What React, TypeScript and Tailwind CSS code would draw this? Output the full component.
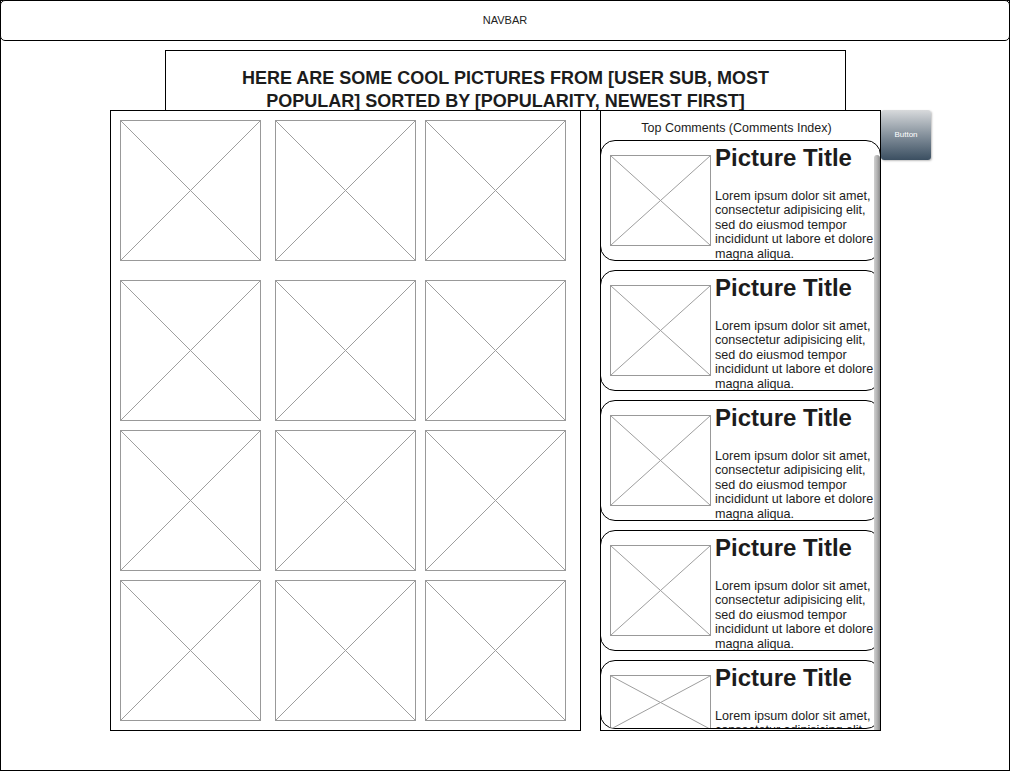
import React from 'react'

const font = { fontFamily: '"Liberation Sans", Arial, sans-serif' }

const lorem =
  'Lorem ipsum dolor sit amet, consectetur adipisicing elit, sed do eiusmod tempor incididunt ut labore et dolore magna aliqua.'

function Placeholder({ className }: { className: string }) {
  return (
    <div className={`relative border border-[#999] bg-white ${className}`}>
      <svg className="absolute inset-0 w-full h-full" preserveAspectRatio="none" viewBox="0 0 100 100">
        <line x1="0" y1="0" x2="100" y2="100" stroke="#9e9e9e" strokeWidth="1" vectorEffect="non-scaling-stroke" />
        <line x1="100" y1="0" x2="0" y2="100" stroke="#9e9e9e" strokeWidth="1" vectorEffect="non-scaling-stroke" />
      </svg>
    </div>
  )
}

function CommentCard({ short }: { short?: boolean }) {
  return (
    <div
      className={`-ml-px w-[281px] shrink-0 flex overflow-hidden rounded-[15px] border border-black bg-white ${
        short ? 'h-[69px]' : 'h-[121px] mb-[9px]'
      }`}
    >
      <Placeholder className={`ml-[9px] mt-[14px] w-[101px] shrink-0 ${short ? 'h-[55px]' : 'h-[91px]'}`} />
      <div className="ml-[4px] pt-[3px] w-[160px] text-[#1c1c1c]">
        <p className="text-[24px] font-bold leading-[28px] whitespace-nowrap">Picture Title</p>
        <p className="mt-[17px] text-[12.6px] leading-[14.4px]">{lorem}</p>
      </div>
    </div>
  )
}

export default function App() {
  const rows = [0, 1, 2, 3]
  const cols = [0, 1, 2]
  return (
    <div style={font} className="w-[1010px] h-[771px] border border-black bg-white text-black">
      <div className="-mt-px -mx-px w-[1010px] h-[41px] rounded-[5px] border border-black bg-white flex items-center justify-center">
        <span className="text-[11px] text-[#222]">NAVBAR</span>
      </div>

      <div className="mt-[9px] ml-[164px] w-[681px] h-[61px] border border-black pt-[16px] text-center text-[18px] font-bold leading-[23px] text-[#1c1c1c]">
        HERE ARE SOME COOL PICTURES FROM [USER SUB, MOST
        <br />
        POPULAR] SORTED BY [POPULARITY, NEWEST FIRST]
      </div>

      <div className="-mt-px flex items-start">
        <div className="ml-[109px] w-[471px] h-[621px] border border-black bg-white p-[9px]">
          <div className="grid grid-cols-[141px_146px_141px] grid-rows-[151px_141px_141px_141px] gap-[9px]">
            {rows.map((r) =>
              cols.map((c) => (
                <Placeholder
                  key={`${r}-${c}`}
                  className={`w-[141px] h-[141px] self-start ${c === 1 ? 'justify-self-end' : ''}`}
                />
              ))
            )}
          </div>
        </div>

        <div className="ml-[19px] relative w-[281px] h-[621px] border border-black bg-white overflow-hidden flex flex-col">
          <div className="h-[29px] shrink-0 pt-[10px] pr-[8px] text-center text-[12.5px] leading-[14px] text-[#1c1c1c]">
            Top Comments (Comments Index)
          </div>
          <CommentCard />
          <CommentCard />
          <CommentCard />
          <CommentCard />
          <CommentCard short />
          <div className="absolute right-0 top-[44px] bottom-0 w-[6px] rounded-t-full bg-linear-to-r from-[#d0d0d0] via-[#b4b4b4] to-[#8c8c8c]" />
        </div>

        <button className="w-[50px] h-[50px] rounded-[3px] bg-linear-to-b from-[#d8dadc] to-[#3b4f61] shadow-[1px_1px_2px_rgba(0,0,0,0.25)] text-[8px] text-white flex items-center justify-center">
          Button
        </button>
      </div>
    </div>
  )
}
